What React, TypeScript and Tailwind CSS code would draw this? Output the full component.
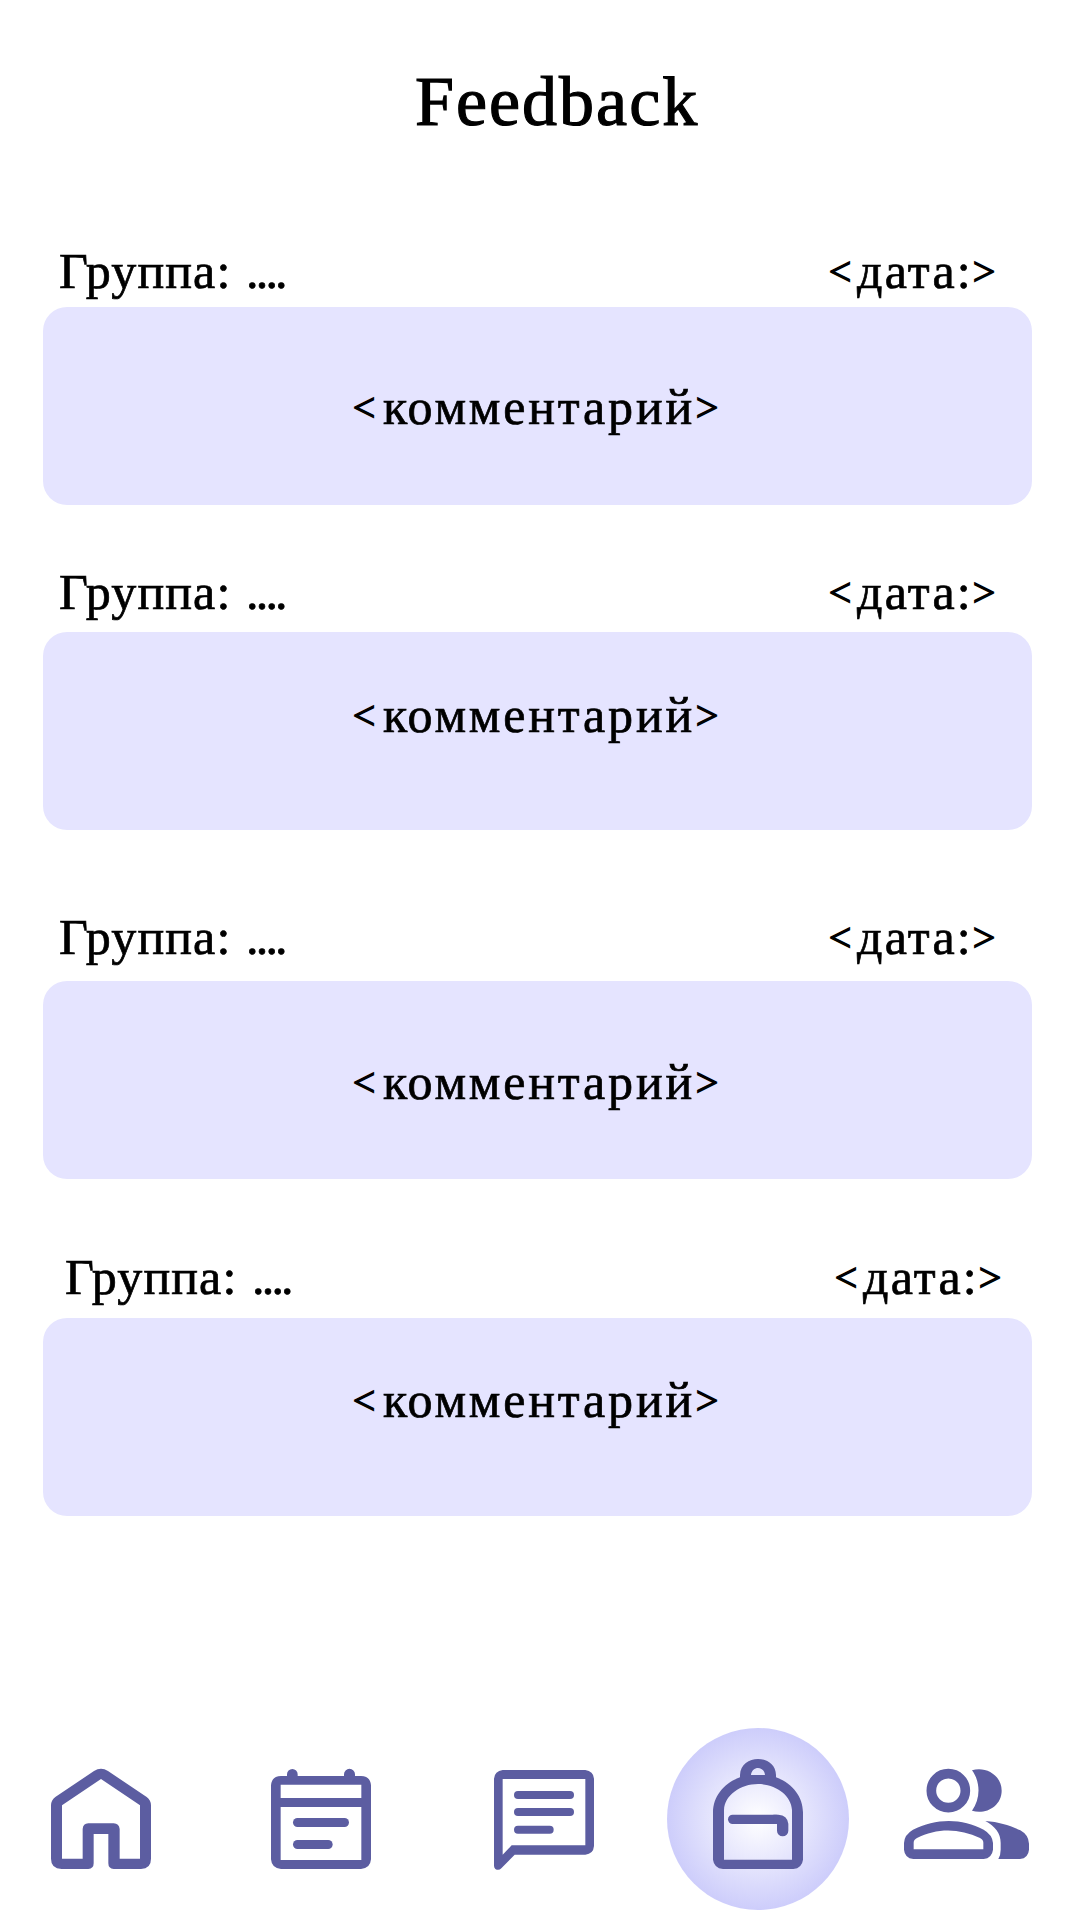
import React from "react";

const INK = "#5c5da1";

type EntryProps = { block: string; header: string; card: string };

const entries: EntryProps[] = [
  { block: "h-[321px]", header: "h-[66px] pl-[59px] pr-[86px]", card: "pt-[70px]" },
  { block: "h-[345px]", header: "h-[70px] pl-[59px] pr-[86px]", card: "pt-[53px]" },
  { block: "h-[340px]", header: "h-[74px] pl-[59px] pr-[86px]", card: "pt-[71px]" },
  { block: "h-[269px]", header: "h-[71px] pl-[65px] pr-[80px]", card: "pt-[52px]" },
];

function Bracket({ children }: { children: string }) {
  return (
    <span className="flex w-[20px] -translate-y-[3px] justify-center text-[40px] leading-[60px] [-webkit-text-stroke:1.4px_black]">
      {children}
    </span>
  );
}

function Entry({ block, header, card }: EntryProps) {
  return (
    <section className={block}>
      <div className={`flex items-start justify-between ${header}`}>
        <div className="flex h-[60px] items-baseline whitespace-pre">
          <span className="w-[187px] tracking-[1.1px]">Группа:</span>
          <span className="tracking-[-2.8px]">....</span>
        </div>
        <div className="flex h-[60px] w-[164px] items-baseline">
          <Bracket>{"<"}</Bracket>
          <span className="ml-[7px] w-[117px] tracking-[2.2px]">дата:</span>
          <Bracket>{">"}</Bracket>
        </div>
      </div>
      <div className={`ml-[43px] flex h-[198px] w-[989px] items-start rounded-[24px] bg-[#e5e4ff] pl-[311px] ${card}`}>
        <div className="flex h-[60px] w-[363px] items-baseline">
          <Bracket>{"<"}</Bracket>
          <span className="ml-[9px] w-[314px] tracking-[2.8px]">комментарий</span>
          <Bracket>{">"}</Bracket>
        </div>
      </div>
    </section>
  );
}

function HomeIcon() {
  return (
    <svg width="150" height="150" viewBox="0 0 450 450" fill={INK}>
      <path fillRule="evenodd" d="M192 93Q213 80 234 93L350 171Q363 181 363 196V356Q363 386 333 387H251Q235 386 235 370V282H191V370Q191 386 175 387H95Q63 386 63 356V196Q63 181 76 171ZM213 117L96 196V356H158V267Q159 251 175 250H251Q267 251 269 267V356H330V196Z" />
    </svg>
  );
}

function CalendarIcon() {
  return (
    <svg width="150" height="150" viewBox="0 0 450 450" fill={INK}>
      <path fillRule="evenodd" d="M111 108V103A16 16 0 0 1 143 103V108H282V103A16 16 0 0 1 315 103V108H333Q361 109 363 136V358Q361 385 333 387H93Q65 385 63 358V136Q65 109 93 108ZM92 134V174H334V134ZM92 201V360H334V201Z" />
      <rect x="129" y="234" width="168" height="27" rx="13.5" />
      <rect x="129" y="300" width="119" height="27" rx="13.5" />
    </svg>
  );
}

function ChatIcon() {
  return (
    <svg width="150" height="150" viewBox="0 0 450 450" fill={INK}>
      <path fillRule="evenodd" d="M98 90H346Q370 93 372 116V318Q370 342 346 344H134L94 385Q86 393 76 387Q72 383 72 377V116Q74 93 98 90ZM98 117V344L125 316H346V117Z" />
      <rect x="132" y="153" width="180" height="24" rx="12" />
      <rect x="132" y="204" width="180" height="24" rx="12" />
      <rect x="132" y="257" width="119" height="24" rx="12" />
    </svg>
  );
}

function BackpackIcon() {
  return (
    <svg width="205" height="205" viewBox="0 0 615 615" fill={INK}>
      <defs>
        <radialGradient id="glow">
          <stop offset="0" stopColor="#ffffff" />
          <stop offset="1" stopColor="#cdcdfb" />
        </radialGradient>
      </defs>
      <circle cx="309" cy="312" r="273" fill="url(#glow)" />
      <path fillRule="evenodd" d="M255 187V180C257 116 361 116 363 180V187C411 204 444 244 444 292V434Q441 459 415 462H204Q177 459 174 434V292C174 244 207 204 255 187ZM288 180H330C327 152 291 152 288 180ZM207 434H411V285C409 240 361 207 309 207C257 207 209 240 207 285Z" />
      <path fill="none" stroke={INK} strokeWidth="28" strokeLinecap="round" d="M233 313H364" />
      <path d="M355 299H370Q397 301 400 326V347A17 17 0 0 1 366 347V327H355Z" />
    </svg>
  );
}

function PeopleIcon() {
  return (
    <svg width="160" height="150" viewBox="0 0 480 450" fill={INK}>
      <circle cx="175" cy="152" r="51" fill="none" stroke={INK} strokeWidth="29" />
      <path d="M246 91C286 78 335 105 335 152C335 199 286 225 246 212C272 177 272 126 246 91Z" />
      <path fillRule="evenodd" d="M42 309Q43 284 69 269C137 234 217 234 281 269Q307 284 309 309V329Q306 354 281 357H70Q44 354 42 329ZM71 328H280V308Q280 299 270 294C208 264 139 264 81 294Q71 299 71 308Z" />
      <path d="M286 243C329 246 360 257 391 271Q416 285 417 311V329Q415 354 390 357H325Q332 346 332 329V309C332 279 315 259 286 243Z" />
    </svg>
  );
}

export default function App() {
  return (
    <main className="flex h-[1920px] w-[1080px] flex-col overflow-hidden bg-white font-['Liberation_Serif',serif] text-[50px] leading-[60px] text-black [-webkit-text-stroke:0.7px_black]">
      <h1 className="h-[241px] pl-[415px] pt-[62px] text-[70px] leading-[80px] tracking-[2px] [-webkit-text-stroke:1.2px_black]">Feedback</h1>
      {entries.map((entry, i) => (
        <Entry key={i} {...entry} />
      ))}
      <nav className="mt-auto flex h-[205px] items-start pl-[30px]">
        <div className="mt-[25px] w-[220px]"><HomeIcon /></div>
        <div className="mt-[25px] w-[220px]"><CalendarIcon /></div>
        <div className="mt-[25px] w-[185px]"><ChatIcon /></div>
        <div className="w-[235px]"><BackpackIcon /></div>
        <div className="mt-[25px] w-[160px]"><PeopleIcon /></div>
      </nav>
    </main>
  );
}
